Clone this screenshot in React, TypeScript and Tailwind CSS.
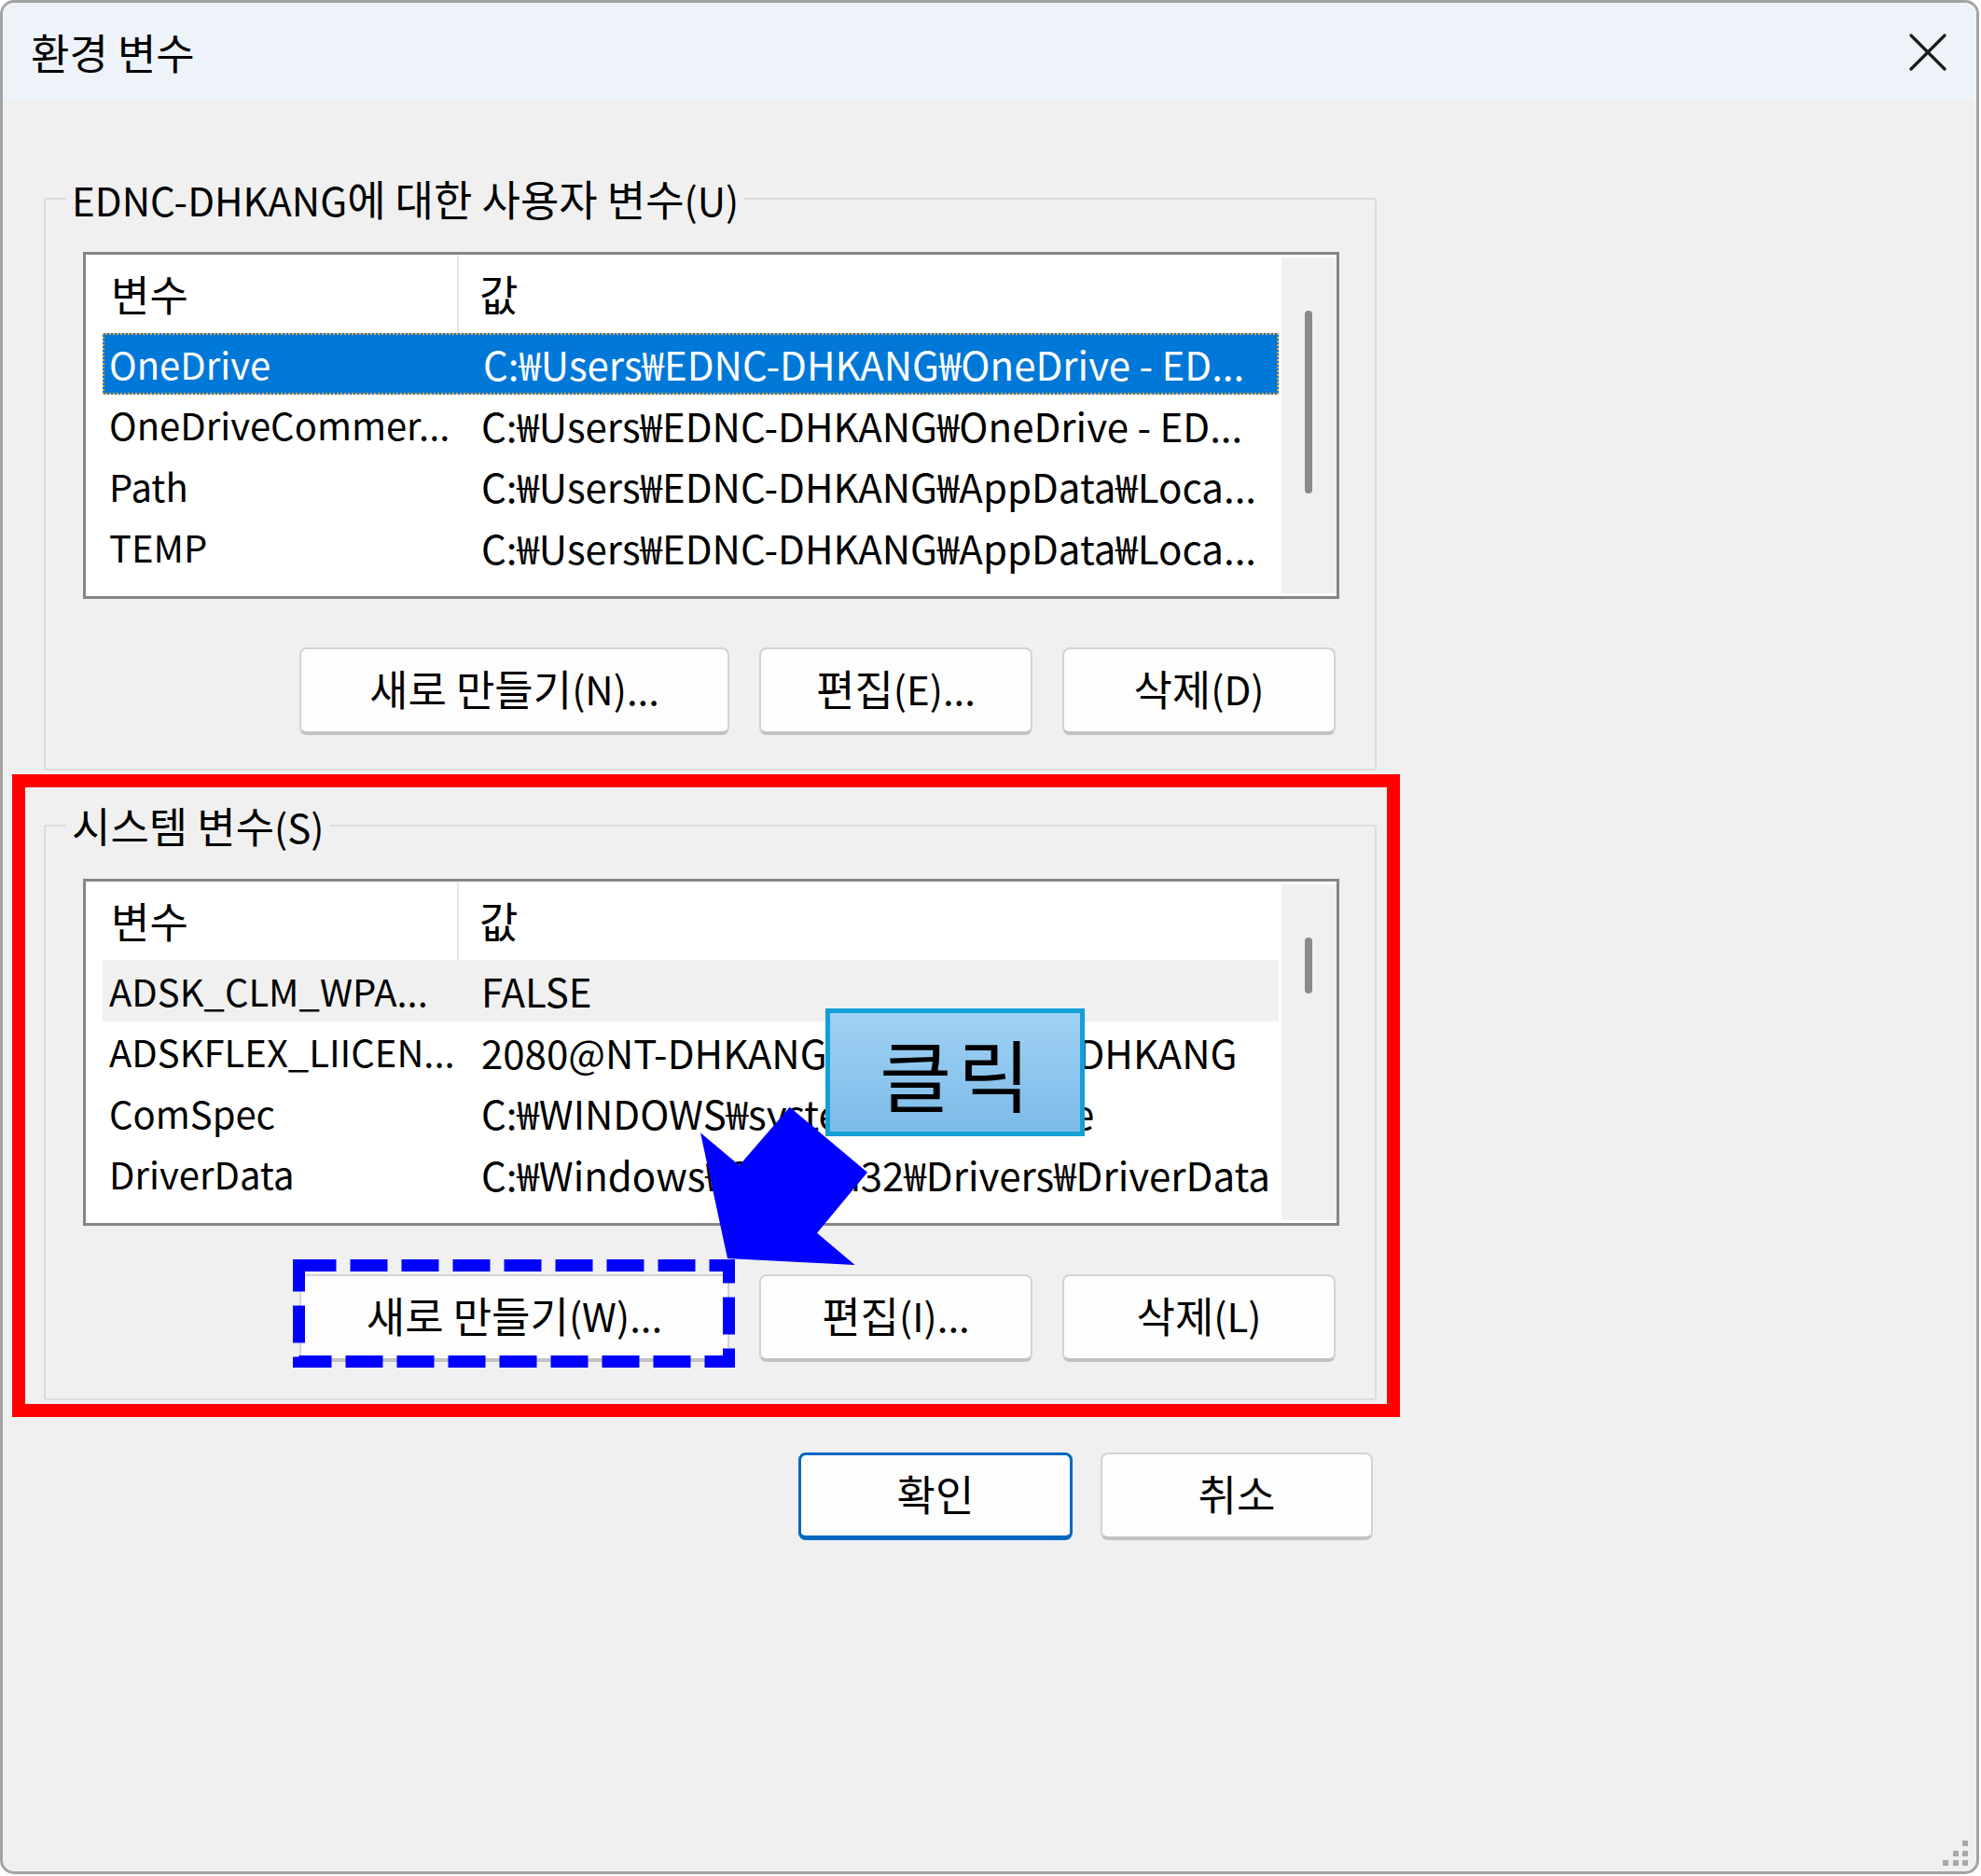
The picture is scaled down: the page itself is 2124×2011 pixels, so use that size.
import React from "react";

type Row = { name: string; value: string };

const userRows: Row[] = [
  { name: "OneDrive", value: "C:₩Users₩EDNC-DHKANG₩OneDrive - ED..." },
  { name: "OneDriveCommer...", value: "C:₩Users₩EDNC-DHKANG₩OneDrive - ED..." },
  { name: "Path", value: "C:₩Users₩EDNC-DHKANG₩AppData₩Loca..." },
  { name: "TEMP", value: "C:₩Users₩EDNC-DHKANG₩AppData₩Loca..." },
];

const sysRows: Row[] = [
  { name: "ADSK_CLM_WPA...", value: "FALSE" },
  { name: "ADSKFLEX_LIICEN...", value: "2080@NT-DHKANG;2080@EDNC-DHKANG" },
  { name: "ComSpec", value: "C:₩WINDOWS₩system32₩cmd.exe" },
  { name: "DriverData", value: "C:₩Windows₩System32₩Drivers₩DriverData" },
];

// Hangul glyphs of the reference font sit larger in the em than Noto's; enlarge Hangul runs.
function T({ s }: { s: string }) {
  const parts = s.split(/([\uAC00-\uD7A3\u3131-\u318E]+(?: [\uAC00-\uD7A3\u3131-\u318E]+)*)/);
  return (
    <>
      {parts.map((p, i) =>
        /[\uAC00-\uD7A3\u3131-\u318E]/.test(p) ? (
          <span key={i} className="text-[45px]">
            {p}
          </span>
        ) : (
          <React.Fragment key={i}>{p}</React.Fragment>
        )
      )}
    </>
  );
}

function VarList({
  rows,
  selected,
  hover,
  thumbH,
}: {
  rows: Row[];
  selected?: number;
  hover?: number;
  thumbH: number;
}) {
  return (
    <div className="h-[372px] border-[3px] border-[#858585] bg-white flex overflow-hidden">
      <div className="w-[1279px] flex flex-col">
        <div className="h-[84px] flex shrink-0">
          <div className="w-[400px] h-full border-r-2 border-[#e8e8e8] flex items-center pl-[27px]">
            <T s="변수" />
          </div>
          <div className="flex-1 flex items-center pl-[22px]">
            <T s="값" />
          </div>
        </div>
        {rows.map((r, i) => {
          const isSel = i === selected;
          const isHover = i === hover;
          return (
            <div
              key={i}
              className={
                "ml-[18px] h-[65.5px] shrink-0 flex items-center whitespace-nowrap " +
                (isSel
                  ? "bg-[#0078d7] text-white border-2 border-dotted border-[#f3a43c]"
                  : isHover
                  ? "bg-[#f0f0f0] text-black"
                  : "text-black")
              }
            >
              <div className={"w-[399px] shrink-0 text-[40px] " + (isSel ? "pl-[5px]" : "pl-[7px]")}>
                {r.name}
              </div>
              <div className="pl-[7px] overflow-hidden">{r.value}</div>
            </div>
          );
        })}
      </div>
      <div className="flex-1 my-[3px] ml-[3px] bg-[#f0f0f0] pt-[57px] pl-[25px]">
        <div className="w-[8px] rounded-full bg-[#8a8a8a]" style={{ height: thumbH }} />
      </div>
    </div>
  );
}

function Btn({ label, w, primary }: { label: string; w: string; primary?: boolean }) {
  return (
    <div
      className={
        "h-[94px] rounded-[8px] bg-[#fdfdfd] flex items-center justify-center pb-[5px] whitespace-nowrap " +
        w +
        " " +
        (primary
          ? "border-[3px] border-[#0067c0] border-b-[5px]"
          : "border-2 border-[#d3d3d3] border-b-[4px] border-b-[#c2c2c2]")
      }
    >
      <T s={label} />
    </div>
  );
}

function Group({
  title,
  children,
  pb,
}: {
  title: string;
  children: React.ReactNode;
  pb: string;
}) {
  return (
    <fieldset className="w-[1429px] border-2 border-[#dcdcdc] rounded-[3px] p-0 m-0">
      <legend className="ml-[22px] px-[6px] h-[56px] leading-[56px] whitespace-nowrap">
        <T s={title} />
      </legend>
      <div className={"pl-[40px] pr-[38px] pt-[29px] " + pb}>{children}</div>
    </fieldset>
  );
}

export default function App() {
  return (
    <div className="relative w-[2124px] h-[2011px] bg-white font-['Noto_Sans_CJK_KR',sans-serif] text-[42px] text-black">
      <div className="w-[2122px] h-[2009px] rounded-[15px] border-[3px] border-[#a3a3a3] bg-[#f0f0f0] overflow-hidden flex flex-col">
        <div className="h-[105px] shrink-0 bg-[#eef3f9] flex items-center justify-between pl-[30px] pr-[32px]">
          <span className="leading-none">
            <T s="환경 변수" />
          </span>
          <svg width="40" height="40" viewBox="0 0 40 40">
            <path
              d="M2 2 L38 38 M38 2 L2 38"
              stroke="#1a1a1a"
              strokeWidth="3.2"
              strokeLinecap="round"
              fill="none"
            />
          </svg>
        </div>

        <div className="pl-[44px] pt-[77px] flex flex-col">
          <Group title="EDNC-DHKANG에 대한 사용자 변수(U)" pb="pb-[36px]">
            <VarList rows={userRows} selected={0} thumbH={196} />
            <div className="mt-[52px] pr-[4px] flex justify-end gap-[32px]">
              <Btn label="새로 만들기(N)..." w="w-[461px]" />
              <Btn label="편집(E)..." w="w-[293px]" />
              <Btn label="삭제(D)" w="w-[293px]" />
            </div>
          </Group>

          <div className="mt-[31px]">
            <Group title="시스템 변수(S)" pb="pb-[39px]">
              <VarList rows={sysRows} hover={0} thumbH={60} />
              <div className="mt-[52px] pr-[4px] flex justify-end gap-[32px]">
                <Btn label="새로 만들기(W)..." w="w-[461px]" />
                <Btn label="편집(I)..." w="w-[293px]" />
                <Btn label="삭제(L)" w="w-[293px]" />
              </div>
            </Group>
          </div>

          <div className="w-[1429px] mt-[56px] pr-[4px] flex justify-end gap-[30px]">
            <Btn label="확인" w="w-[294px]" primary />
            <Btn label="취소" w="w-[292px]" />
          </div>
        </div>
      </div>

      {/* resize grip */}
      <div className="absolute left-[2104px] top-[1973px] w-[6px] h-[6px] bg-[#a8a8a8]" />
      <div className="absolute left-[2094px] top-[1984px] w-[6px] h-[6px] bg-[#a8a8a8]" />
      <div className="absolute left-[2104px] top-[1984px] w-[6px] h-[6px] bg-[#a8a8a8]" />
      <div className="absolute left-[2083px] top-[1994px] w-[6px] h-[6px] bg-[#a8a8a8]" />
      <div className="absolute left-[2094px] top-[1994px] w-[6px] h-[6px] bg-[#a8a8a8]" />
      <div className="absolute left-[2104px] top-[1994px] w-[6px] h-[6px] bg-[#a8a8a8]" />

      {/* red annotation box */}
      <div className="absolute left-[13px] top-[830px] w-[1488px] h-[689px] border-[14px] border-[#ff0000]" />

      {/* dashed blue box */}
      <svg className="absolute left-[314px] top-[1350px]" width="474" height="116" viewBox="0 0 474 116">
        <rect
          x="6.5"
          y="6.5"
          width="461"
          height="103"
          fill="none"
          stroke="#0000ff"
          strokeWidth="13"
          strokeDasharray="40 15"
        />
      </svg>

      {/* arrow */}
      <svg className="absolute left-[740px] top-[1180px]" width="200" height="190" viewBox="0 0 200 190">
        <polygon
          points="106.7,6.7 190,76.7 136,141.7 176.7,176 40,169 11,34.3 52.7,69.3"
          fill="#0000ff"
        />
      </svg>

      {/* callout */}
      <div className="absolute left-[885px] top-[1081px] w-[278px] h-[137px] border-[5px] border-[#159fd5] bg-gradient-to-b from-[#a0d1f4] to-[#7cbbe8] flex items-center justify-center">
        <span className="text-[84px] leading-none tracking-[0.08em] pl-[6px]">클릭</span>
      </div>
    </div>
  );
}
